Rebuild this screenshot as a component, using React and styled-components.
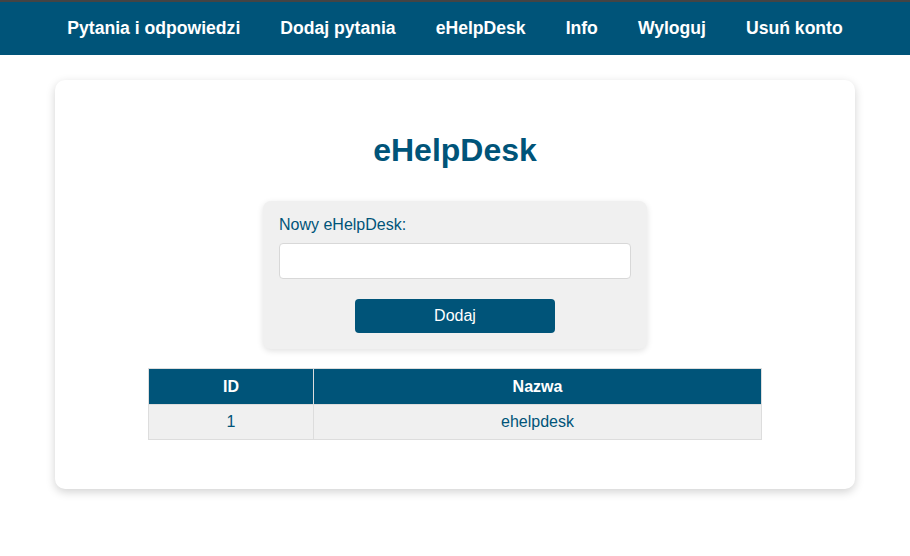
import React from "react";
import styled, { createGlobalStyle } from "styled-components";

const Global = createGlobalStyle`
  body { margin: 0; background: #fff; font-family: "Liberation Sans", Arial, sans-serif; }
`;

const BLUE = "#005479";

const Nav = styled.nav`
  background: ${BLUE};
  border-top: 2px solid #444;
  height: 53px;
  display: flex;
  justify-content: center;
  align-items: center;
`;

const NavLink = styled.a`
  color: #fff;
  font-weight: bold;
  font-size: 17.6px;
  text-decoration: none;
  padding: 0 20px;
  cursor: pointer;
`;

const Main = styled.main`
  display: flex;
  justify-content: center;
  padding: 25px 0 40px;
`;

const Card = styled.section`
  width: 800px;
  box-sizing: border-box;
  background: #fff;
  border-radius: 10px;
  box-shadow: 0 3px 10px rgba(0, 0, 0, 0.18);
  padding: 52px 93px 49px;
  display: flex;
  flex-direction: column;
  align-items: center;
`;

const Title = styled.h1`
  margin: 0;
  color: ${BLUE};
  font-size: 32px;
  font-weight: bold;
  line-height: 36px;
`;

const FormBox = styled.form`
  margin-top: 33px;
  width: 384px;
  box-sizing: border-box;
  background: #f0f0f0;
  border-radius: 8px;
  box-shadow: 0 2px 6px rgba(0, 0, 0, 0.12);
  padding: 14px 16px 16px;
  display: flex;
  flex-direction: column;
  align-items: center;
`;

const Label = styled.label`
  align-self: stretch;
  color: ${BLUE};
  font-size: 16px;
  line-height: 20px;
`;

const Input = styled.input`
  margin-top: 8px;
  align-self: stretch;
  height: 36px;
  box-sizing: border-box;
  border: 1px solid #d8d8d8;
  border-radius: 4px;
  background: #fff;
  font-size: 16px;
  padding: 0 8px;
`;

const Button = styled.button`
  margin-top: 20px;
  width: 200px;
  height: 34px;
  border: none;
  border-radius: 4px;
  background: ${BLUE};
  color: #fff;
  font-family: inherit;
  font-size: 16px;
  cursor: pointer;
`;

const Table = styled.table`
  margin-top: 19px;
  width: 614px;
  border-collapse: collapse;
  font-size: 16px;
`;

const Th = styled.th`
  background: ${BLUE};
  color: #fff;
  font-weight: bold;
  height: 35px;
  padding: 0;
  border: 1px solid #ddd;
  width: ${(p) => p.$w || "auto"};
`;

const Td = styled.td`
  background: #f0f0f0;
  color: ${BLUE};
  text-align: center;
  height: 34px;
  padding: 0;
  border: 1px solid #ddd;
`;

export default function App() {
  const links = ["Pytania i odpowiedzi", "Dodaj pytania", "eHelpDesk", "Info", "Wyloguj", "Usuń konto"];
  return (
    <>
      <Global />
      <Nav>
        {links.map((l) => (
          <NavLink key={l}>{l}</NavLink>
        ))}
      </Nav>
      <Main>
        <Card>
          <Title>eHelpDesk</Title>
          <FormBox onSubmit={(e) => e.preventDefault()}>
            <Label htmlFor="nowy">Nowy eHelpDesk:</Label>
            <Input id="nowy" type="text" />
            <Button type="submit">Dodaj</Button>
          </FormBox>
          <Table>
            <thead>
              <tr>
                <Th $w="164px">ID</Th>
                <Th>Nazwa</Th>
              </tr>
            </thead>
            <tbody>
              <tr>
                <Td>1</Td>
                <Td>ehelpdesk</Td>
              </tr>
            </tbody>
          </Table>
        </Card>
      </Main>
    </>
  );
}
